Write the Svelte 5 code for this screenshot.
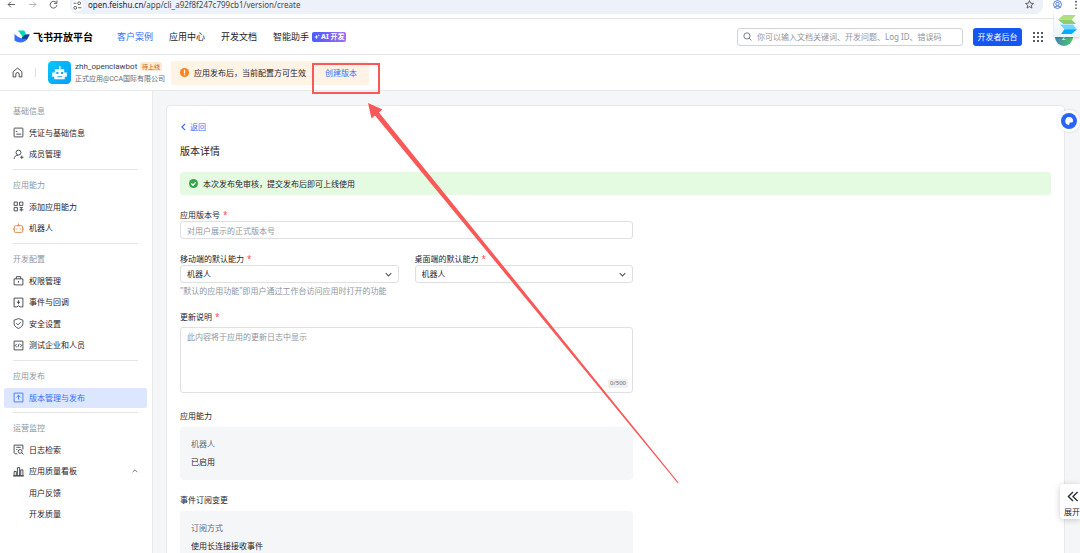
<script lang="ts">
	type Item = { name: string; icon?: string[]; active?: boolean; orange?: boolean; open?: boolean; child?: boolean };
	type Group = { title: string; items: Item[] };

	const nav = ["客户案例", "应用中心", "开发文档"];

	const groups: Group[] = [
		{
			title: "基础信息",
			items: [
				{ name: "凭证与基础信息", icon: ["M3 2h14a1 1 0 0 1 1 1v14a1 1 0 0 1-1 1H3a1 1 0 0 1-1-1V3a1 1 0 0 1 1-1z", "M5 8h3M6 13h9"] },
				{ name: "成员管理", icon: ["M10 2a4.500 4.500 0 1 0 0 9a4.500 4.500 0 1 0 0-9z", "M2 18c0-4 3-6.500 7-6.500", "M16 12v6M13 15h6"] }
			]
		},
		{
			title: "应用能力",
			items: [
				{ name: "添加应用能力", icon: ["M2 2h6v6H2zM12 2h6v6h-6zM2 12h6v6H2z", "M12 12h6M15 12v7M12 16h7"] },
				{ name: "机器人", orange: true, icon: ["M4 5h12a1.500 1.500 0 0 1 1.500 1.500v9A1.500 1.500 0 0 1 16 17H4a1.500 1.500 0 0 1-1.500-1.500v-9A1.500 1.500 0 0 1 4 5z", "M10 5V1M0 9v4M20 9v4M7 10v2M13 10v2"] }
			]
		},
		{
			title: "开发配置",
			items: [
				{ name: "权限管理", icon: ["M2 7h16v11H2z", "M6 7V3h8v4M10 11v3"] },
				{ name: "事件与回调", icon: ["M2 2h16v16h-5l-3-2l-3 2H2z", "M10 6v7M7 9.500h6"] },
				{ name: "安全设置", icon: ["M10 1l8 3v6c0 4-3 7-8 9c-5-2-8-5-8-9V4z", "M6 9.500l3 3l5-5"] },
				{ name: "测试企业和人员", icon: ["M2 2h16v16H2z", "M7 7l-3 3l3 3M13 7l3 3l-3 3M9 13l2-6"] }
			]
		},
		{
			title: "应用发布",
			items: [
				{ name: "版本管理与发布", active: true, icon: ["M2 2h16v16H2z", "M10 14V6M6.500 9.500L10 6l3.500 3.500"] }
			]
		},
		{
			title: "运营监控",
			items: [
				{ name: "日志检索", icon: ["M8 18H4l-2-2V2h16v8", "M6 6h8M6 10h2M13 10a3.500 3.500 0 1 0 0 7a3.500 3.500 0 1 0 0-7zM16 16l3 3"] },
				{ name: "应用质量看板", open: true, icon: ["M2 10h4v8H2zM8 3h4v15H8zM14 7h4v11h-4z", "M0 18h20"] },
				{ name: "用户反馈", child: true },
				{ name: "开发质量", child: true }
			]
		}
	];

	let version = "";
	let mobile = "机器人";
	let desktop = "机器人";
	let notes = "";
</script>

<div class="app">
	<div class="browser">
		<button class="tool" aria-label="back"><svg viewBox="0 0 16 16"><path d="M14 8H2M7 3L2 8l5 5" /></svg></button>
		<button class="tool dim" aria-label="forward"><svg viewBox="0 0 16 16"><path d="M2 8h12M9 3l5 5l-5 5" /></svg></button>
		<button class="tool" aria-label="reload"><svg viewBox="0 0 16 16"><path d="M13 5a6 6 0 1 0 1 4M14 1v5H9" /></svg></button>
		<div class="address">
			<span class="site"><svg viewBox="0 0 16 16"><path d="M1 4h5M9 12h6" /><circle cx="11" cy="4" r="2.500" /><circle cx="4" cy="12" r="2.500" /></svg></span>
			<span class="url">open.feishu.cn<i>/app/cli_a92f8f247c799cb1/version/create</i></span>
			<svg class="star" viewBox="0 0 16 16"><path d="M8 1l2 4.700l5 .4l-3.800 3.300l1.200 5L8 11.700l-4.400 2.700l1.200-5L1 6.100l5-.4z" /></svg>
		</div>
		<svg class="profile" viewBox="0 0 16 16"><circle cx="8" cy="8" r="7" /><circle cx="8" cy="7" r="3" /><path d="M3 13c2-3 8-3 10 0" /></svg>
		<svg class="more" viewBox="0 0 4 12"><circle cx="2" cy="2" r="1" /><circle cx="2" cy="6" r="1" /><circle cx="2" cy="10" r="1" /></svg>
	</div>

	<header class="header">
		<a class="logo" href="/">
			<svg viewBox="0 0 32 26">
				<path fill="#00d6b9" d="M7 1h13c3 3 4 7 4 10l-6 5C15 10 12 5 7 1z" />
				<path fill="#133c9a" d="M15 16c5-6 9-9 17-7c-3 3-4 8-7 11c-4 3-8 0-10-4z" />
				<path fill="#3370ff" d="M1 8c7 7 14 10 24 10c2 0 2-2 3-2c-5 9-18 12-27 5z" />
			</svg>
			飞书开放平台
		</a>
		<nav>
			{#each nav as name, i}
				<a href="/" class:current={i == 0}>{name}</a>
			{/each}
			<a href="/" class="helper">智能助手 <span class="ai"><svg viewBox="0 0 10 10"><path d="M4 1l1 3l3 1l-3 1l-1 3l-1-3l-3-1l3-1zM8 0l.5 1.500L10 2l-1.500.5L8 4l-.5-1.500L6 2l1.500-.5z" /></svg>AI 开发</span></a>
		</nav>
		<label class="search">
			<svg viewBox="0 0 16 16"><circle cx="7" cy="7" r="5.500" /><path d="M11 11l4 4" /></svg>
			<input type="search" aria-label="搜索" placeholder="你可以输入文档关键词、开发问题、Log ID、错误码" />
		</label>
		<button class="console">开发者后台</button>
		<svg class="apps" viewBox="0 0 10 10">
			{#each [1, 5, 9] as y}
				{#each [1, 5, 9] as x}
					<circle cx={x} cy={y} r="1" />
				{/each}
			{/each}
		</svg>
		<span class="avatar">z</span>
	</header>

	<div class="appbar">
		<a href="/" class="home" aria-label="首页"><svg viewBox="0 0 20 20"><path d="M2 8.500L10 2l8 6.500V18h-5v-5a3 3 0 0 0-6 0v5H2z" /></svg></a>
		<span class="bar"></span>
		<svg class="bot" viewBox="0 0 22 22">
			<defs><linearGradient id="sky" x1="0" y1="0" x2="1" y2="1"><stop offset="0" stop-color="#00c8ff" /><stop offset="1" stop-color="#0a9df5" /></linearGradient></defs>
			<rect width="22" height="22" rx="4" fill="url(#sky)" />
			<path fill="#fff" d="M10.500 5h1.500v3h3.500v3h2.500v4h-2v2.500H6V15H4v-4h2.500V8h4z" />
			<path fill="#0aaaf5" d="M8 10.500h2v2H8zM12.500 10.500h2v2h-2zM9 14.500h4.500v1H9z" />
		</svg>
		<div class="about">
			<div class="name">zhh_openclawbot <span class="tag">待上线</span></div>
			<div class="owner">正式应用@CCA国际有限公司</div>
		</div>
		<div class="notice">
			<svg viewBox="0 0 10 10"><circle cx="5" cy="5" r="5" fill="#ff811a" /><path stroke="#fff" d="M5 2v4M5 7v1" /></svg>
			应用发布后，当前配置方可生效
			<a href="/">创建版本</a>
		</div>
	</div>

	<div class="body">
		<aside>
			{#each groups as group}
				<section>
					<h2>{group.title}</h2>
					<ul>
						{#each group.items as item}
							<li>
								<a href="/" class:active={item.active} class:orange={item.orange} class:child={item.child}>
									{#if item.icon}
										<svg viewBox="0 0 20 20">
											{#each item.icon as d}
												<path {d} />
											{/each}
										</svg>
									{/if}
									{item.name}
									{#if item.open}
										<svg class="up" viewBox="0 0 10 10"><path d="M1 7l4-4l4 4" /></svg>
									{/if}
								</a>
							</li>
						{/each}
					</ul>
				</section>
			{/each}
		</aside>

		<main>
			<div class="card">
				<a class="return" href="/"><svg viewBox="0 0 8 10"><path d="M6 1L2 5l4 4" /></svg>返回</a>
				<h1>版本详情</h1>
				<div class="success">
					<svg viewBox="0 0 10 10"><circle cx="5" cy="5" r="5" fill="#32a645" /><path stroke="#fff" d="M2.500 5l2 2l3-3.500" /></svg>
					本次发布免审核，提交发布后即可上线使用
				</div>

				<form>
					<div class="field">
						<label for="version">应用版本号 <b>*</b></label>
						<input id="version" type="text" placeholder="对用户展示的正式版本号" bind:value={version} />
					</div>
					<div class="pair">
						<div class="field">
							<label for="mobile">移动端的默认能力 <b>*</b></label>
							<div class="select">
								<select id="mobile" bind:value={mobile}><option>机器人</option></select>
								<svg viewBox="0 0 10 10"><path d="M1 3l4 4l4-4" /></svg>
							</div>
						</div>
						<div class="field">
							<label for="desktop">桌面端的默认能力 <b>*</b></label>
							<div class="select">
								<select id="desktop" bind:value={desktop}><option>机器人</option></select>
								<svg viewBox="0 0 10 10"><path d="M1 3l4 4l4-4" /></svg>
							</div>
						</div>
					</div>
					<p class="hint">"默认的应用功能"即用户通过工作台访问应用时打开的功能</p>
					<div class="field">
						<label for="notes">更新说明 <b>*</b></label>
						<div class="notes">
							<textarea id="notes" placeholder="此内容将于应用的更新日志中显示" bind:value={notes}></textarea>
							<span class="count">{notes.length}/500</span>
						</div>
					</div>
					<h3>应用能力</h3>
					<dl>
						<dt>机器人</dt>
						<dd>已启用</dd>
					</dl>
					<h3>事件订阅变更</h3>
					<dl>
						<dt>订阅方式</dt>
						<dd>使用长连接接收事件</dd>
					</dl>
				</form>
			</div>
		</main>
	</div>

	<div class="widget">
		<svg viewBox="0 0 20 20"><path fill="#b0de7c" d="M6 1h12l-4 4.500H1z" /><path fill="#8dcc70" d="M1 5.500h13l4 4H6z" /><path fill="#72d5ff" d="M3 10h12l4 4.500H7z" /><path fill="#00adff" d="M7 14.500h12l-5 4.500H4z" /></svg>
	</div>
	<button class="chat" aria-label="客服"><svg viewBox="0 0 16 16"><circle cx="8" cy="8" r="8" fill="#2864ff" /><path fill="#fff" d="M8 4a4 4 0 0 0-1 7.800c1 .4 1.500 0 1.500-1V9.500H10c1 0 2-.5 2-1.500a4 4 0 0 0-4-4z" /></svg></button>
	<button class="expand"><svg viewBox="0 0 12 12"><path d="M6 1L1 6l5 5M11 1L6 6l5 5" /></svg>展开</button>
	<div class="mark"></div>
	<svg class="arrow" viewBox="0 0 312 382"><path d="M0 0l14.500 6.500l-3.500 3L310.500 379.500L310 380.500L7 12.500l-3.500 3z" /></svg>
</div>

<style>
	:global(body) {
		margin: 0;
		overflow: hidden;
	}

	.app {
		position: relative;
		height: 100vh;
		display: flex;
		flex-direction: column;
		overflow: hidden;
		background: #fff;
		color: #1f2329;
		font: 8px/12px "Noto Sans", "Noto Sans CJK SC", sans-serif;
	}

	a {
		color: inherit;
		text-decoration: none;
	}

	button, input, select, textarea {
		font: inherit;
		color: inherit;
		box-sizing: border-box;
		margin: 0;
	}

	button {
		padding: 0;
		border: 0;
		background: none;
	}

	svg {
		display: block;
		flex: none;
		fill: none;
		stroke-width: 1.5;
	}

	h1, h2, h3, p, ul, dl, dd {
		margin: 0;
		padding: 0;
		font-weight: normal;
	}

	.browser {
		flex: none;
		display: flex;
		align-items: flex-start;
		height: 18px;
		padding: 0 2px 0 7px;
		border-bottom: 1px solid #e4e5e7;
	}

	.tool {
		width: 10px;
		margin-right: 11px;
	}

	.browser svg {
		width: 9px;
		height: 9px;
		stroke: #474747;
	}

	.browser .dim svg {
		stroke: #a8a8a8;
	}

	.address {
		flex: 1;
		display: flex;
		align-items: flex-start;
		height: 14px;
		margin-right: 10px;
		padding: 0 9px 0 2px;
		background: #edf2fa;
		border-radius: 0 0 8px 8px;
	}

	.site {
		padding: 1px;
		margin-right: 5px;
		background: #fff;
		border-radius: 5px;
	}

	.url {
		flex: 1;
		line-height: 10px;
	}

	.url i {
		font-style: normal;
		color: #474747;
	}

	.browser .profile {
		margin-right: 12px;
		stroke: #3569c8;
	}

	.browser .more {
		width: 4px;
		height: 10px;
		fill: #333;
		stroke: none;
	}

	.header {
		flex: none;
		display: flex;
		align-items: center;
		height: 35px;
		padding: 0 7px 0 14px;
		border-bottom: 1px solid #e4e5e7;
	}

	.logo {
		display: flex;
		align-items: center;
		gap: 3px;
		width: 103px;
		font-size: 10px;
		font-weight: bold;
		color: #000;
		white-space: nowrap;
	}

	.logo svg {
		width: 16px;
		height: 13px;
	}

	nav {
		flex: 1;
		display: flex;
		gap: 16px;
		font-size: 9px;
		white-space: nowrap;
	}

	nav .current {
		color: #3370ff;
	}

	.helper {
		display: flex;
		align-items: center;
		gap: 3px;
	}

	.ai {
		display: flex;
		align-items: center;
		gap: 1px;
		height: 10px;
		padding: 0 2px;
		border-radius: 2px;
		background: linear-gradient(90deg, #4a5bff, #a369f0);
		color: #fff;
		font-size: 7px;
		font-weight: bold;
	}

	.ai svg {
		width: 6px;
		height: 6px;
		fill: #fff;
	}

	.search {
		display: flex;
		align-items: center;
		gap: 5px;
		box-sizing: border-box;
		width: 226px;
		height: 18px;
		margin-right: 10px;
		padding: 0 5px;
		border: 1px solid #d0d3d6;
		border-radius: 3px;
	}

	.search svg {
		width: 9px;
		height: 9px;
		stroke: #646a73;
	}

	.search input {
		flex: 1;
		min-width: 0;
		padding: 0;
		border: 0;
		outline: 0;
		background: none;
	}

	::placeholder {
		color: #8f959e;
		opacity: 1;
	}

	.console {
		width: 49px;
		height: 18px;
		background: #1456f0;
		border-radius: 3px;
		color: #fff;
	}

	.apps {
		width: 10px;
		height: 10px;
		margin: 0 12px 0 11px;
		fill: #1f2329;
	}

	.avatar {
		width: 18px;
		height: 18px;
		border-radius: 50%;
		background: linear-gradient(90deg, #4289b0, #4fc46a);
		color: #fff;
		line-height: 18px;
		text-align: center;
	}

	.appbar {
		flex: none;
		display: flex;
		align-items: center;
		height: 35px;
		padding-left: 12px;
		border-bottom: 1px solid #e8e9eb;
	}

	.home svg {
		width: 11px;
		height: 11px;
		stroke: #2b2f36;
	}

	.bar {
		width: 1px;
		height: 9px;
		margin: 0 12px;
		background: #dee0e3;
	}

	.bot {
		width: 23px;
		height: 23px;
		margin-right: 4px;
	}

	.about {
		width: 87px;
		margin-right: 9px;
		font-family: Roboto, "Noto Sans CJK SC", sans-serif;
		white-space: nowrap;
	}

	.name {
		display: flex;
		align-items: center;
		justify-content: space-between;
		color: #3b4048;
	}

	.tag {
		padding: 0 2px;
		border-radius: 2px;
		background: #feead2;
		color: #c65a10;
		font-size: 6px;
		line-height: 9px;
	}

	.owner {
		color: #646a73;
		font-size: 7px;
	}

	.notice {
		display: flex;
		align-items: center;
		gap: 5px;
		height: 24px;
		padding: 0 12px 0 9px;
		background: #fff3e5;
		border-radius: 3px;
	}

	.notice a {
		margin-left: 14px;
		color: #3370ff;
	}

	.notice svg, .success svg {
		width: 9px;
		height: 9px;
	}

	.body {
		flex: 1;
		min-height: 0;
		display: flex;
		background: #f5f6f7;
	}

	aside {
		flex: none;
		box-sizing: border-box;
		width: 153px;
		padding: 9px 5px 0 4px;
		background: #fff;
		border-right: 1px solid #e8e9eb;
	}

	section::after {
		content: "";
		display: block;
		height: 1px;
		margin: 4px 9px;
		background: #e4e5e7;
	}

	section:last-child::after {
		display: none;
	}

	h2 {
		padding-left: 9px;
		font-size: 8px;
		line-height: 22px;
		color: #8f959e;
	}

	li {
		display: flex;
		align-items: center;
		height: 21px;
	}

	li:nth-child(even) {
		height: 22px;
	}

	li a {
		flex: 1;
		display: flex;
		align-items: center;
		gap: 5px;
		height: 20px;
		padding: 0 9px;
		border-radius: 2px;
	}

	li svg {
		width: 11px;
		height: 11px;
		stroke: #2b2f36;
	}

	li .child {
		padding-left: 25px;
	}

	li .active {
		background: #dce6ff;
		color: #3370ff;
	}

	li .active svg {
		stroke: #3370ff;
	}

	li .orange svg {
		stroke: #c9782a;
	}

	li .up {
		width: 6px;
		height: 6px;
		margin-left: auto;
		stroke: #646a73;
	}

	main {
		flex: 1;
		min-width: 0;
		padding: 14px 15px 0 13px;
		overflow: hidden;
	}

	.card {
		min-height: 100%;
		box-sizing: border-box;
		padding: 15px 13px 24px;
		background: #fff;
		border: 1px solid #e8e9eb;
		border-radius: 4px;
	}

	.return {
		display: flex;
		align-items: center;
		gap: 3px;
		color: #3370ff;
	}

	.return svg {
		width: 7px;
		height: 8px;
		stroke: #3370ff;
	}

	h1 {
		margin-top: 10px;
		font-size: 10px;
		line-height: 16px;
	}

	.success {
		display: flex;
		align-items: center;
		gap: 5px;
		height: 23px;
		margin-top: 13px;
		padding: 0 9px;
		background: #e4fae1;
		border-radius: 3px;
	}

	form {
		max-width: 453px;
	}

	.field {
		flex: 1;
		margin-top: 14px;
	}

	label {
		display: block;
	}

	label b {
		margin-left: 1px;
		color: #f54a45;
		font-weight: normal;
	}

	.field input, select, textarea {
		display: block;
		width: 100%;
		height: 18px;
		padding: 0 6px;
		border: 1px solid #dee0e3;
		border-radius: 3px;
		background: #fff;
		outline: 0;
	}

	.pair {
		display: flex;
		gap: 16px;
	}

	.select {
		position: relative;
	}

	select {
		appearance: none;
	}

	.select svg {
		position: absolute;
		top: 6px;
		right: 7px;
		width: 7px;
		height: 7px;
		stroke: #51565d;
		pointer-events: none;
	}

	.hint {
		margin-top: 2px;
		color: #8f959e;
	}

	.notes {
		position: relative;
		margin-top: 4px;
	}

	.notes textarea {
		height: 66px;
		padding: 3px 6px;
		resize: none;
	}

	.count {
		position: absolute;
		right: 5px;
		bottom: 5px;
		padding: 0 2px;
		border-radius: 2px;
		background: #eff0f1;
		color: #646a73;
		font-size: 6px;
		line-height: 9px;
	}

	h3 {
		margin-top: 14px;
		font-size: 8px;
	}

	.field + h3 {
		margin-top: 17px;
	}

	dl {
		margin-top: 5px;
		padding: 11px 11px 12px;
		background: #f5f6f7;
		border-radius: 4px;
	}

	dt {
		margin-bottom: 6px;
		color: #646a73;
	}

	.widget {
		position: absolute;
		top: 12px;
		right: 0;
		padding: 2px 2px 2px 3px;
		background: linear-gradient(#fff, #e8f6fc);
		box-shadow: 0 1px 2px #0003;
	}

	.widget svg {
		width: 21px;
		height: 21px;
	}

	.chat {
		position: absolute;
		top: 110px;
		right: 0;
		padding: 3px;
		border-radius: 50%;
		background: #fff;
		box-shadow: 0 0 3px #0002;
	}

	.chat svg {
		width: 16px;
		height: 16px;
	}

	.expand {
		position: absolute;
		top: 484px;
		right: 0;
		width: 20px;
		height: 35px;
		padding: 6px 0 0 4px;
		background: #fff;
		border-radius: 4px 0 0 4px;
		box-shadow: 0 1px 6px #0003;
		text-align: left;
		white-space: nowrap;
	}

	.expand svg {
		width: 12px;
		height: 11px;
		margin: 0 0 4px 3px;
		stroke: #2b2f36;
	}

	.mark {
		position: absolute;
		left: 312px;
		top: 63px;
		width: 64px;
		height: 27px;
		border: 2px solid #f95858;
	}

	.arrow {
		position: absolute;
		left: 368px;
		top: 103px;
		width: 312px;
		height: 382px;
		fill: #f95858;
		pointer-events: none;
	}
</style>
